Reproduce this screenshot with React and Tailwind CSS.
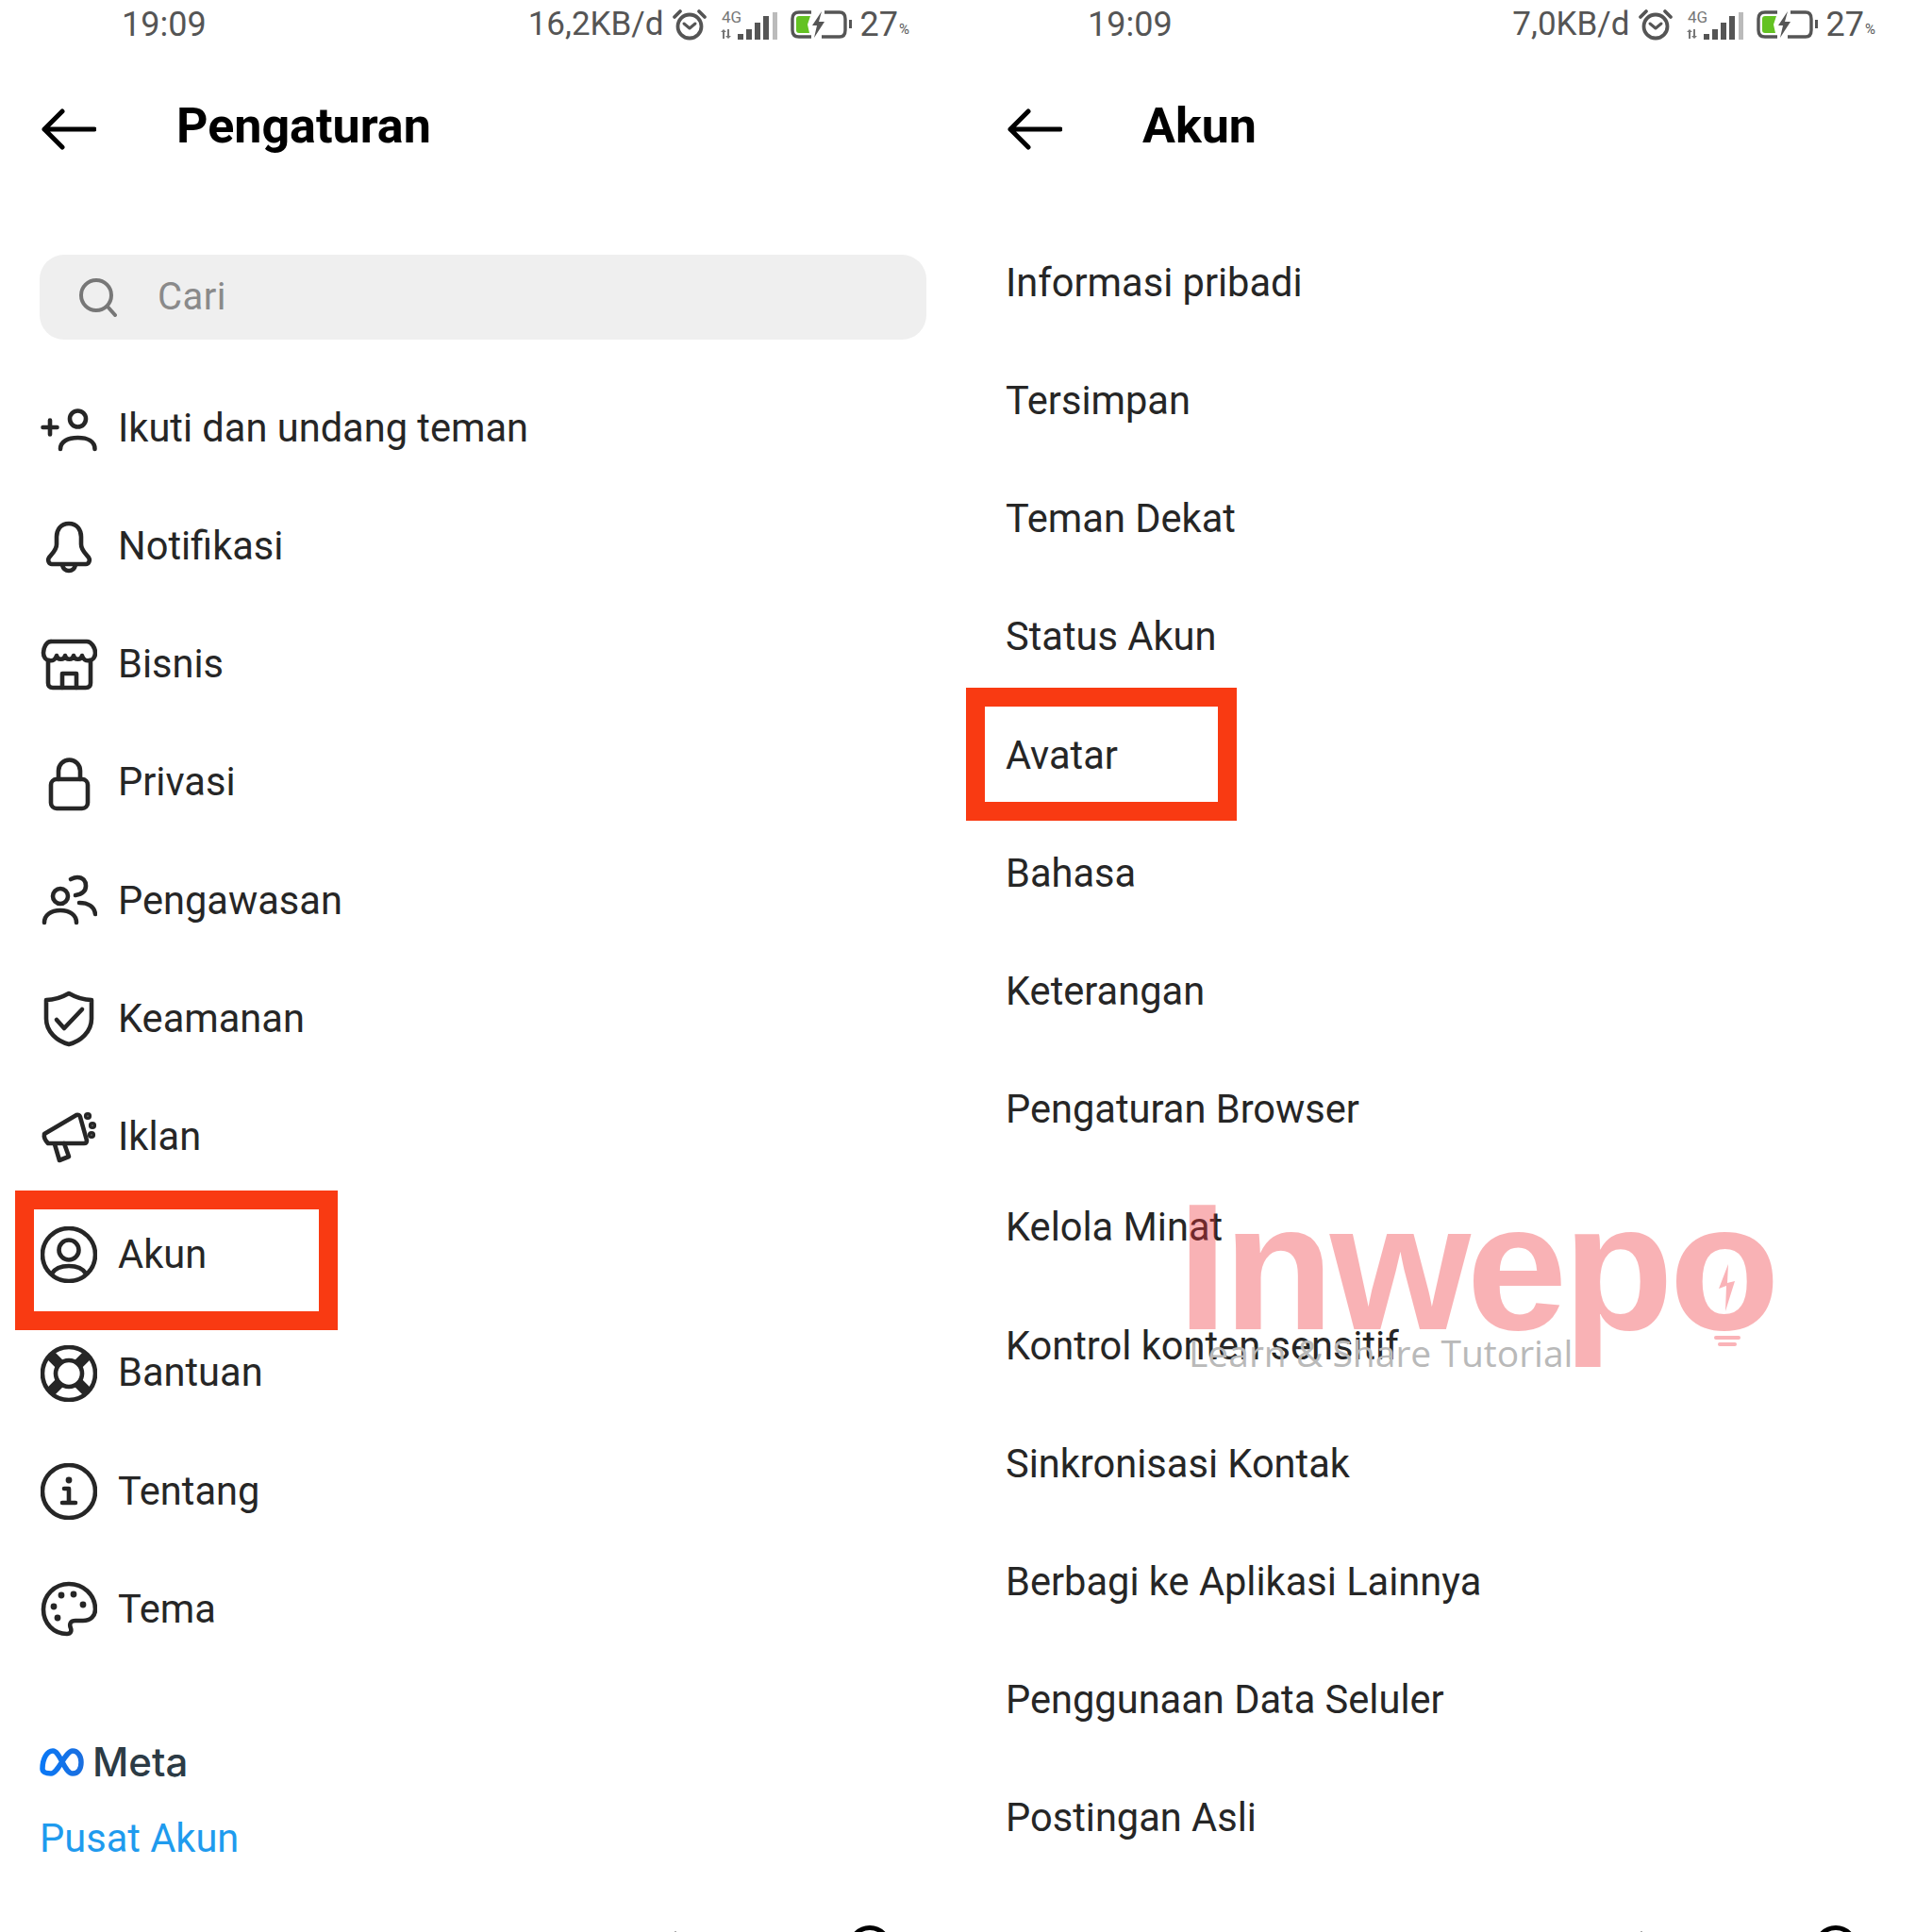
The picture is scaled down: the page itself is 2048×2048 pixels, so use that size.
import React from "react";

const Ico = ({ children }) => (
    <svg viewBox="0 0 60 60" fill="none" stroke="#262626" strokeWidth="4.6" strokeLinecap="round" strokeLinejoin="round" className="w-[60px] h-[60px] shrink-0">
        {children}
    </svg>
);

const icons = {
    addUser: (
        <Ico>
            <circle cx="39.5" cy="20" r="8.5" />
            <path d="M21 52c0-8 8-12 18.5-12s18 4 18 12" />
            <path d="M2.500 29h15M10 21.500v15" />
        </Ico>
    ),
    bell: (
        <Ico>
            <path d="M30 6c-9 0-13 7-13 14v8c0 6-4 9-8 14-2 3 0 7 3 7h36c3 0 5-4 3-7-4-5-8-8-8-14v-8c0-7-4-14-13-14z" />
            <path d="M23 50c1 4 4 6 7 6s6-2 7-6" />
        </Ico>
    ),
    store: (
        <Ico>
            <path d="M11 6h38c5 0 9 7 9 12 0 5-3 8-6 8" />
            <path d="M11 6C6 6 3 13 3 18c0 5 3 8 6 8" />
            <path d="M9 26c4 1 7-1 8-5 1 5 8 5 9 0 1 5 8 5 9 0 1 5 8 5 9 0 1 4 4 6 8 5" />
            <path d="M8 26v24q0 5 5 5h35q5 0 5-5V26" />
            <path d="M23 55V40h15v15" />
        </Ico>
    ),
    lock: (
        <Ico>
            <rect x="11" y="26" width="39" height="31" rx="6" />
            <path d="M19 26v-9a11.500 11.500 0 0 1 23 0v9" />
        </Ico>
    ),
    people: (
        <Ico>
            <circle cx="21" cy="25" r="8" />
            <path d="M4 53c0-8 7-13 17-13s17 5 17 13" />
            <path d="M32 7c2-1 4-2 7-2 6 0 9 4 9 9 0 6-5 9-11 10" />
            <path d="M41 32c9 0 16 4 17 12" />
        </Ico>
    ),
    shield: (
        <Ico>
            <path d="M30 3c7 4 14 7 24 7v20c0 14-12 24-24 27C18 54 6 44 6 30V10c10 0 17-3 24-7z" />
            <path d="M17 31l8 9 19-20" />
        </Ico>
    ),
    megaphone: (
        <Ico>
            <path d="M4 27L38 7q3-1 4 2l7 25q0 3-3 3L8 37q-5-5-4-10z" />
            <path d="M15 38l5 17 10-4-5-14" />
            <circle cx="50" cy="8" r="1.800" />
            <circle cx="55" cy="18" r="1.800" />
            <circle cx="54" cy="28" r="1.800" />
        </Ico>
    ),
    user: (
        <Ico>
            <circle cx="30" cy="30" r="28" />
            <circle cx="30" cy="25" r="10.500" />
            <path d="M12 50c3-5 10-8 18-8s15 3 18 8" />
        </Ico>
    ),
    help: (
        <Ico>
            <circle cx="30" cy="30" r="28" />
            <circle cx="30" cy="30" r="14" />
            <path strokeWidth="11" strokeLinecap="butt" d="M11 11l9 9M49 11l-9 9M11 49l9-9M49 49l-9-9" />
        </Ico>
    ),
    info: (
        <Ico>
            <circle cx="30" cy="30" r="28" />
            <circle cx="30" cy="18" r="3.400" fill="#262626" stroke="none" />
            <path d="M25 27h5v15M23 42h14" />
        </Ico>
    ),
    palette: (
        <Ico>
            <path d="M30 3C15 3 3 15 3 30s11 26 25 26c4 0 5-3 4-6-2-5 0-8 5-8h8c8 0 13-5 13-12C58 14 45 3 30 3z" />
            <g fill="#262626" stroke="none">
                <circle cx="22" cy="15" r="3.400" />
                <circle cx="35" cy="14" r="3.400" />
                <circle cx="45" cy="25" r="3.400" />
                <circle cx="14" cy="27" r="3.400" />
                <circle cx="18" cy="39" r="3.400" />
            </g>
        </Ico>
    ),
};

const mainItems = [
    ["addUser", "Ikuti dan undang teman"],
    ["bell", "Notifikasi"],
    ["store", "Bisnis"],
    ["lock", "Privasi"],
    ["people", "Pengawasan"],
    ["shield", "Keamanan"],
    ["megaphone", "Iklan"],
    ["user", "Akun"],
    ["help", "Bantuan"],
    ["info", "Tentang"],
    ["palette", "Tema"],
];

const accountItems = [
    "Informasi pribadi",
    "Tersimpan",
    "Teman Dekat",
    "Status Akun",
    "Avatar",
    "Bahasa",
    "Keterangan",
    "Pengaturan Browser",
    "Kelola Minat",
    "Kontrol konten sensitif",
    "Sinkronisasi Kontak",
    "Berbagi ke Aplikasi Lainnya",
    "Penggunaan Data Seluler",
    "Postingan Asli",
];

const StatusBar = ({ speed }) => (
    <div className="h-[52px] flex items-center justify-between pl-[129px] pr-[60px] text-[36px] text-[#555555]">
        <span>19:09</span>
        <div className="flex items-center">
            <span className="text-[35px]">{speed}</span>
            {/* alarm */}
            <svg viewBox="0 0 38 34" fill="none" stroke="#555555" strokeWidth="3.800" strokeLinecap="round" strokeLinejoin="round" className="w-[38px] h-[34px] ml-[8px]">
                <circle cx="19" cy="19" r="12.500" />
                <path d="M13 16l6 5 6-5" strokeWidth="3" />
                <path d="M3 9l6-6M35 9l-6-6" />
            </svg>
            {/* network */}
            <svg viewBox="0 0 62 34" className="w-[62px] h-[34px] ml-[12px]">
                <text x="3" y="15" fontSize="17" fill="#777777" fontFamily="Roboto, sans-serif">4G</text>
                <g fill="#555555">
                    <path d="M2 25l3-3 3 3H6v7H4v-7zM9 22h2v7h2l-3 3-3-3h2z" opacity="0.8" />
                    <rect x="20" y="27" width="6" height="6" />
                    <rect x="29" y="22" width="6" height="11" />
                    <rect x="38" y="15" width="6" height="18" />
                    <rect x="47" y="8" width="6" height="25" />
                </g>
                <rect x="57" y="4" width="5" height="29" fill="#bbbbbb" />
            </svg>
            {/* battery */}
            <svg viewBox="0 0 66 30" fill="none" className="w-[66px] h-[30px] ml-[14px]">
                <path d="M22 2H9Q2 2 2 9v12q0 7 7 7h13" stroke="#555555" strokeWidth="3.400" />
                <path d="M36 2h16q6 0 6 7v12q0 7-6 7H33" stroke="#555555" strokeWidth="3.400" />
                <path d="M6 9q0-3 3-3h12l-3 9 2 9H9q-3 0-3-3z" fill="#63c222" />
                <path d="M33 1L23 16h5l-3 13 11-17h-6z" fill="#555555" />
                <rect x="62" y="10" width="3" height="9" fill="#555555" />
            </svg>
            <span className="ml-[8px]">27</span>
            <span className="text-[15px] mt-[10px] ml-[1px]">%</span>
        </div>
    </div>
);

const Header = ({ title }) => (
    <div className="h-[166px] flex items-center pl-[44px]">
        <svg viewBox="0 0 58 44" fill="none" stroke="#000000" strokeWidth="5" strokeLinecap="round" strokeLinejoin="round" className="w-[58px] h-[44px] mt-[3px]">
            <path d="M56 22H3M22 3L3 22l19 19" />
        </svg>
        <h1 className="ml-[85px] text-[52px] leading-[60px] font-bold text-black mb-[2px]">{title}</h1>
    </div>
);

// cropped avatar of the tab bar, only its top edge shows
const BottomEdge = () => (
    <div className="mt-auto h-[7px] overflow-hidden flex">
        <div className="ml-[715px] mt-[6px] w-[2px] h-[1px] bg-[#aaaaaa]" />
        <div className="ml-[182px] w-[46px] h-[46px] shrink-0 rounded-full border-[5px] border-black" />
    </div>
);

export default function App() {
    return (
        <div className="relative w-[2048px] h-[2048px] overflow-hidden bg-white font-[Roboto,sans-serif] grid grid-cols-2">
            {/* Left: Pengaturan */}
            <div className="h-[2048px] flex flex-col">
                <StatusBar speed="16,2KB/d" />
                <Header title="Pengaturan" />
                <div className="mt-[52px] mx-[42px] h-[90px] rounded-[26px] bg-[#efefef] flex items-center pl-[40px]">
                    <svg viewBox="0 0 42 42" fill="none" stroke="#777777" strokeWidth="4" strokeLinecap="round" className="w-[42px] h-[42px]">
                        <circle cx="20" cy="19" r="16" />
                        <path d="M32 31l8 9" />
                    </svg>
                    <span className="ml-[43px] text-[40px] tracking-[0.5px] text-[#8a8a8a]">Cari</span>
                </div>
                <div className="mt-[31.500px] px-[43px]">
                    {mainItems.map(([icon, label]) => (
                        <div key={label} className="h-[125.2px] flex items-center">
                            {icons[icon]}
                            <span className="ml-[22px] text-[41.6px] text-[#262626]">{label}</span>
                        </div>
                    ))}
                </div>
                <div className="mt-[83px] ml-[42px] flex items-center h-[32px]">
                    <svg viewBox="0 0 47 32" fill="none" className="w-[47px] h-[32px]">
                        <defs>
                            <linearGradient id="metaGrad" x1="0" y1="0" x2="1" y2="0">
                                <stop offset="0" stopColor="#0a78f5" />
                                <stop offset="1" stopColor="#1a6fe0" />
                            </linearGradient>
                        </defs>
                        <path d="M3 23C3 12 8 4 14 4c8 0 12 24 21 24 6 0 9-5 9-12 0-7-4-12-9-12-8 0-15 24-23 24-6 0-9-2-9-5z" stroke="url(#metaGrad)" strokeWidth="5.500" strokeLinejoin="round" />
                    </svg>
                    <span className="ml-[9px] text-[42px] leading-none font-medium text-[#2c3b45] font-[Inter,sans-serif]">Meta</span>
                </div>
                <div className="mt-[40px] ml-[42px] text-[41.6px] leading-[50px] text-[#1f9bee]">Pusat Akun</div>
                <BottomEdge />
            </div>

            {/* Right: Akun */}
            <div className="h-[2048px] flex flex-col">
                <StatusBar speed="7,0KB/d" />
                <Header title="Akun" />
                <div className="mt-[19.500px] pl-[42px]">
                    {accountItems.map((label) => (
                        <div key={label} className="h-[125.2px] flex items-center text-[41.6px] text-[#262626]">
                            {label}
                        </div>
                    ))}
                </div>
                <BottomEdge />
            </div>

            {/* Red highlight frames */}
            <div className="absolute left-[16px] top-[1262px] w-[342px] h-[148px] border-[20px] border-[#f93a12]" />
            <div className="absolute left-[1024px] top-[729px] w-[287px] h-[141px] border-[20px] border-[#f93a12]" />

            {/* Watermark */}
            <div className="absolute left-[1248px] top-[1233px] text-[192px] leading-[220px] font-bold font-['Liberation_Sans',sans-serif] tracking-[-4.5px] text-[#f13238] opacity-[0.37]">
                Inwepo
            </div>
            <svg viewBox="0 0 40 100" className="absolute left-[1811px] top-[1338px] w-[40px] h-[100px]" fill="#fab3b8">
                <path d="M21 2L11 28l8-3-1 27 10-32-8 2z" />
                <rect x="6" y="78" width="28" height="4" rx="2" />
                <rect x="10" y="85" width="20" height="4" rx="2" />
            </svg>
            <div className="absolute left-[1260px] top-[1406px] text-[39px] leading-[56px] font-['Open_Sans',sans-serif] text-[#b9b9b9]">
                Learn &amp; Share Tutorial
            </div>
        </div>
    );
}
